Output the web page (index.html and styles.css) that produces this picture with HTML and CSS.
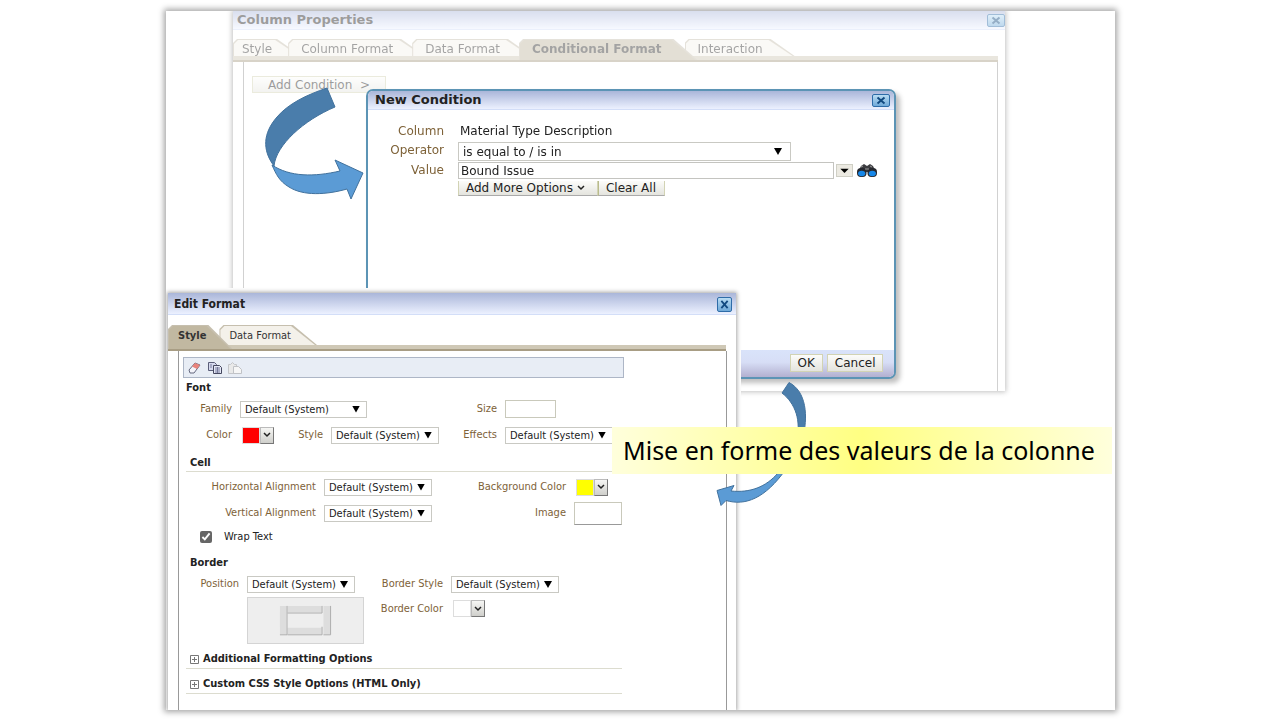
FILE: index.html
```html
<!DOCTYPE html>
<html lang="fr">
<head>
<meta charset="utf-8">
<title>Mise en forme conditionnelle</title>
<link rel="stylesheet" href="styles.css">
</head>
<body>
<main class="slide">

  <section class="win props" aria-label="Column Properties">
    <header class="bar"><h2>Column Properties</h2>
      <button class="close" aria-label="Close"><svg viewBox="0 0 10 8"><path d="M1.5 1l7 6M8.5 1l-7 6"/></svg></button></header>
    <nav class="tabs">
      <button class="tab">Style</button>
      <button class="tab">Column Format</button>
      <button class="tab">Data Format</button>
      <button class="tab active">Conditional Format</button>
      <button class="tab">Interaction</button>
    </nav>
    <div class="panel"><button class="btn add">Add Condition&nbsp; &gt;</button></div>
  </section>

  <section class="win cond" aria-label="New Condition">
    <header class="bar"><h2>New Condition</h2>
      <button class="close" aria-label="Close"><svg viewBox="0 0 10 8"><path d="M1.5 1l7 6M8.5 1l-7 6"/></svg></button></header>
    <div class="fields">
      <span class="lab">Column</span><span class="text">Material Type Description</span>
      <label class="lab" for="op">Operator</label>
      <span class="sel wide"><select id="op"><option>is equal to / is in</option></select></span>
      <label class="lab" for="val">Value</label>
      <div class="value">
        <input id="val" type="text" value="Bound Issue">
        <button class="drop" aria-label="Open list"><svg viewBox="0 0 10 6"><path d="M0 1h10L5 6z"/></svg></button>
        <button class="search" aria-label="Search"><svg viewBox="0 0 20 14">
          <path d="M4 2l3-2 3 2 3-2 3 2 3 6H1z" fill="#3c3c40"/>
          <rect x="0" y="4" width="9.500" height="9" rx="4" fill="#26282e"/><rect x="10.500" y="4" width="9.500" height="9" rx="4" fill="#26282e"/>
          <ellipse cx="4.700" cy="9.500" rx="3.600" ry="2.700" fill="#1687e8"/><ellipse cx="15.300" cy="9.500" rx="3.600" ry="2.700" fill="#1687e8"/>
          <path d="M4 3l2-1M13 2l2 1M8 5h4" stroke="#999" fill="none"/></svg></button>
      </div>
      <div class="actions">
        <button class="btn">Add More Options <svg viewBox="0 0 8 6"><path d="M1 1l3 3 3-3"/></svg></button>
        <button class="btn">Clear All</button>
      </div>
    </div>
    <footer><button class="btn">OK</button><button class="btn">Cancel</button></footer>
  </section>

  <svg class="arrow big" viewBox="263 83 103 120" aria-hidden="true">
    <path fill="#4a7dab" d="M327 88L335 107C304 120 276 145 274 166C262 150 263 133 277 117C288 104 306 95 327 88z"/>
    <path fill="#5b9bd5" d="M272 165C290 177 314 177 340 171L335 160L363 173L351 199L347 189C326 195 303 196 289 187C279 181 276 174 272 165z"/>
  </svg>

  <div class="sheet">
  <section class="win edit" aria-label="Edit Format">
    <header class="bar"><h2>Edit Format</h2>
      <button class="close" aria-label="Close"><svg viewBox="0 0 10 8"><path d="M1.5 0l7 8M8.5 0l-7 8"/></svg></button></header>
    <nav class="tabs">
      <button class="tab active">Style</button>
      <button class="tab">Data Format</button>
    </nav>
    <div class="panel">
      <div class="toolbar">
        <button aria-label="Clear"><svg viewBox="0 0 14 12"><path d="M1 8l6-7 5 2-6 8-4 0z" fill="#f4f4fa" stroke="#666a80"/><path d="M4 4.500l3-3.500 5 2-3 4z" fill="#e8837c"/></svg></button>
        <button aria-label="Copy"><svg viewBox="0 0 14 12"><path d="M.5.5h6l2 2v6h-8z" fill="#d5d9ee" stroke="#5a5d78"/><path d="M5.500 3.500h6l2 2v6h-8z" fill="#e4e7f6" stroke="#44475f"/><path d="M2 3h2M2 5h2M7 6h5M7 8h5M7 10h5M9.500 5v6" stroke="#777b9c"/></svg></button>
        <button aria-label="Paste"><svg viewBox="0 0 14 12"><path d="M.5 2.500h2l2-2 2 2h2v9h-8z" fill="#e9e9e9" stroke="#c4c6ca"/><path d="M5.500 4.500h5l3 3v4h-8z" fill="#f6f6f6" stroke="#c0c2c6"/></svg></button>
      </div>
      <h3 class="first">Font</h3>
      <div class="row"><label class="lab a" for="fam">Family</label><span class="sel fam"><select id="fam"><option>Default (System)</option></select></span>
        <label class="lab size" for="size">Size</label><input class="sizebox" id="size" type="text"></div>
      <div class="row"><span class="lab a">Color</span><span class="swatch red"><i></i><button aria-label="Color"><svg viewBox="0 0 8 6"><path d="M1 1l3 3 3-3"/></svg></button></span>
        <label class="lab sty" for="sty">Style</label><span class="sel"><select id="sty"><option>Default (System)</option></select></span>
        <label class="lab eff" for="eff">Effects</label><span class="sel"><select id="eff"><option>Default (System)</option></select></span></div>
      <h3 class="ruled">Cell</h3>
      <div class="row"><label class="lab c" for="ha">Horizontal Alignment</label><span class="sel"><select id="ha"><option>Default (System)</option></select></span>
        <span class="lab d">Background Color</span><span class="swatch yellow"><i></i><button aria-label="Background Color"><svg viewBox="0 0 8 6"><path d="M1 1l3 3 3-3"/></svg></button></span></div>
      <div class="row"><label class="lab c" for="va">Vertical Alignment</label><span class="sel"><select id="va"><option>Default (System)</option></select></span>
        <label class="lab d" for="img">Image</label><input class="imgbox" id="img" type="text"></div>
      <div class="row wrap"><input type="checkbox" id="wr" checked><label for="wr">Wrap Text</label></div>
      <h3>Border</h3>
      <div class="border">
        <label class="lab" for="pos">Position</label><span class="sel"><select id="pos"><option>Default (System)</option></select></span>
        <label class="lab" for="bs">Border Style</label><span class="sel"><select id="bs"><option>Default (System)</option></select></span>
        <button class="preview" aria-label="Border sides"><svg viewBox="0 0 56 32"><path fill="#ddd" d="M1 1h7v30H1zM47 1h7v30h-7zM9 1h36v7H9zM9 24h36v7H9z"/><path d="M1 31.500h7.500V1M47 31.500h7.500V1M9 8.500h36.500V1M9 31.500h36.500V23" fill="none" stroke="#aaa"/></svg></button>
        <span class="lab">Border Color</span><span class="swatch white"><i></i><button aria-label="Border Color"><svg viewBox="0 0 8 6"><path d="M1 1l3 3 3-3"/></svg></button></span>
      </div>
      <h3 class="more"><button><svg viewBox="0 0 9 9"><path d="M.5.5h8v8h-8zM2 4.500h5M4.500 2v5"/></svg>Additional Formatting Options</button></h3>
      <h3 class="more"><button><svg viewBox="0 0 9 9"><path d="M.5.5h8v8h-8zM2 4.500h5M4.500 2v5"/></svg>Custom CSS Style Options (HTML Only)</button></h3>
    </div>
  </section>
  </div>

  <svg class="arrow small" viewBox="712 378 98 130" aria-hidden="true">
    <path fill="#4a7dab" d="M787 381.500L780 392C793 402 800 420 794 440L800 440C807 415 804 390 787 381.500z"/>
    <path fill="#5b9bd5" d="M784 468C763 498 743 505 724 499.500L719 504.500L715 489.500L732 484.500L729 490C748 492 764 486 776 472z"/>
  </svg>
  <p class="caption">Mise en forme des valeurs de la colonne</p>
</main>
</body>
</html>
```
FILE: styles.css
```css
* { box-sizing: border-box; }
body {
  margin: 0;
  min-height: 100vh;
  padding: 11px 165px 10px 166px;
  display: flex;
  background: #fff;
  font: 12px/16px "DejaVu Sans", Verdana, sans-serif;
  color: #222;
}
button, input, select { font: inherit; color: inherit; margin: 0; padding: 0; border: 0; background: none; border-radius: 0; }
h2, h3, p { margin: 0; font-size: inherit; }
svg { display: block; }

.slide {
  position: relative;
  flex: 1;
  min-width: 0;
  overflow: hidden;
  background: #fff;
  box-shadow: 0 0 6px 2px rgba(0, 0, 0, .36);
}
.win { display: flex; flex-direction: column; background: #fff; }
.props, .cond, .sheet, .arrow, .caption { position: absolute; }

/* title bars */
.bar {
  display: flex;
  align-items: center;
  justify-content: space-between;
  height: 19px;
  padding: 0 4px 0 7px;
  background: linear-gradient(#aab6d9, #ecf1ff);
  border-bottom: 1px solid #d3def8;
}
.bar h2 { font-size: 13px; }
.close { width: 18px; height: 13px; padding: 1px 3px; border: 1px solid #2e6ca8; border-radius: 2px; background: linear-gradient(#b9dcf3, #6fa9d8); }
.close svg { width: 100%; height: 100%; stroke: #124a80; stroke-width: 2; }

/* tabs */
.tabs { display: flex; align-items: flex-end; border-bottom: 2px solid #a89d84; box-shadow: inset 0 -4px #cfc8b6; }
.tab { position: relative; z-index: 0; height: 20px; padding: 0 32px 3px 13px; margin-left: -13px; white-space: nowrap; color: #333; }
.tab:first-child { margin-left: 0; padding-left: 9px; }
.tab::before, .tab::after {
  content: "";
  position: absolute;
  z-index: -1;
  inset: 0 0 4px;
  background: #c6bfae;
  clip-path: polygon(0 100%, 0 4px, 4px 0, calc(100% - 24px) 0, 100% 100%);
}
.tab::after { inset: 1px 2px 4px 1px; background: #f4f1ea; }
.tab.active { z-index: 1; font-weight: bold; }
.tab.active::before { bottom: 0; }
.tab.active::after { bottom: 0; background: #c1b8a1; }

/* buttons, labels, lists */
.btn { padding: 0 6px; border: 1px solid #d2d3b4; background: linear-gradient(#fcfcfa, #e4e4de); white-space: nowrap; }
.btn svg, .swatch svg { width: 8px; height: 6px; fill: none; stroke: #222; stroke-width: 1.500; }
.lab { color: #7e6238; text-align: right; white-space: nowrap; }
.sel { position: relative; display: flex; width: 108px; height: 17px; border: 1px solid #c9c9c3; background: #fff; }
.sel select { appearance: none; width: 100%; padding: 0 4px; outline: 0; }
.sel::after { content: ""; position: absolute; right: 6px; top: 4px; width: 8px; height: 7px; background: #000; clip-path: polygon(0 0, 100% 0, 50% 100%); pointer-events: none; }

/* Column Properties */
.props { left: 67px; top: 0; width: 81.300%; height: 380px; opacity: .45; box-shadow: 0 0 5px 1px #777; }
.props .bar { padding: 0 0 0 4px; }
.props .tabs { margin: 9px 7px 0 0; }
.props .tab { height: 21px; padding-bottom: 2px; }
.props .tab:first-child { padding-right: 29px; }
.props .tab.active { padding-right: 36px; }
.props .panel { flex: 1; margin: 0 7px 0 10px; padding: 14px 8px; border: solid #999; border-width: 0 1px; }
.add { height: 17px; padding: 0 15px; }

/* New Condition */
.cond { left: 200px; top: 78px; width: 55.900%; height: 290px; overflow: hidden; border: 2px solid #5c94b5; border-radius: 7px; box-shadow: 4px 4px 5px rgba(0, 0, 0, .25); }
.fields { flex: 1; display: grid; grid-template-columns: 76px minmax(0, 1fr); column-gap: 14px; align-content: start; grid-template-rows: 19px 20px 19px 15px; padding: 13px 17px 0 0; }
.text { padding-left: 2px; }
.wide { width: 333px; height: 19px; }
.wide::after { top: 5px; right: 8px; }
.value { display: flex; align-items: center; gap: 2px; height: 17px; }
.value input { flex: 1; min-width: 0; height: 17px; padding: 0 2px; border: 1px solid #c4c4c0; }
.drop { width: 17px; height: 13px; padding: 3px; border: 1px solid #cfcfc5; background: #eceae2; }
.drop svg { width: 9px; height: 5px; }
.search { width: 20px; height: 14px; margin-left: 2px; }
.actions { grid-column: 2; display: flex; }
.actions .btn { display: flex; align-items: center; gap: 4px; height: 15px; padding: 0 8px 0 7px; border-top: 0; border-bottom-color: #aaa; }
.actions .btn:first-child { padding-right: 12px; }
.actions .btn + .btn { border-left-color: #b9bb8c; }
.cond footer { display: flex; justify-content: flex-end; gap: 4px; padding: 4px 11px; height: 27px; background: linear-gradient(#d9e3fa, #d7def6 45%, #b3b0d0); }
.cond footer .btn { height: 18px; padding: 0 7px; }

/* Edit Format, over a white sheet */
.sheet { left: 2px; top: 277px; bottom: 0; width: 60.400%; padding: 5px 5px 0 0; background: #fff; font: 11px/16px "DejaVu Sans Condensed", Tahoma, sans-serif; }
.edit { height: 100%; box-shadow: 0 0 4px 1px rgba(0, 0, 0, .35); }
.edit .bar { height: 22px; padding: 1px 4px 0 6px; }
.edit h2 { font-size: 12px; }
.edit .close { width: 15px; height: 15px; padding: 2px; }
.edit .tabs { margin: 10px 10px 0 0; }
.edit .tab { height: 24px; padding: 0 26px 2px 10px; }
.edit .panel { flex: 1; display: flex; flex-direction: column; margin: 0 9px 0 10px; padding: 6px 104px 0 7px; border: solid #999; border-width: 0 1px; }
.toolbar { display: flex; align-items: center; gap: 6px; height: 21px; margin: 0 -2px 0 -3px; padding: 0 4px; border: 1px solid #adb6c6; background: #e8edf5; }
.toolbar svg { width: 14px; height: 12px; fill: none; }
.edit h3 { padding-left: 4px; margin-top: 2px; }
.edit h3.first { padding-left: 0; }
.edit h3.ruled { margin-top: 7px; height: 17px; border-bottom: 1px solid #dcdccf; margin-bottom: 2px; }
.row { display: flex; align-items: center; gap: 8px; height: 26px; white-space: nowrap; }
.a { width: 46px; }
.fam { width: 127px; }
.size { width: 122px; }
.sizebox, .imgbox { width: 51px; height: 18px; border: 1px solid #c9c9bb; }
.imgbox { width: 48px; height: 23px; border-bottom-color: #999; }
.sty { width: 41px; }
.eff { width: 50px; }
.c { width: 130px; }
.d { width: 126px; }
.swatch { display: flex; width: 34px; height: 17px; padding-left: 2px; }
.swatch i { width: 18px; border: 1px solid #ddd; }
.swatch button { flex: 1; padding: 0 2px; border: 1px solid #bbb; border-right-color: #777; border-bottom-color: #777; background: linear-gradient(#f6f6f4, #cfcfcb); }
.red i { background: #f00; }
.yellow i { background: #ff0; }
.wrap { height: 22px; padding-left: 14px; gap: 12px; }
.wrap input { width: 12px; height: 12px; accent-color: #666; }
.edit .wrap + h3 { margin-top: 7px; margin-bottom: 5px; }
.border { display: grid; grid-template-columns: 53px 117px 71px 108px; column-gap: 8px; row-gap: 4px; align-items: start; }
.border .swatch { margin-top: 3px; }
.border .preview + .lab { margin-top: 4px; }
.preview { grid-column: 2; width: 117px; height: 47px; padding: 7px 31px; border: 1px solid #d4d4d4; background: #eee; }
.edit .more { height: 18px; margin: 7px 0 0; border-bottom: 1px solid #dcdccf; }
.more button { display: flex; align-items: center; gap: 4px; font-weight: bold; }
.more svg { width: 9px; height: 9px; fill: none; stroke: #777; }

/* arrows and caption */
.arrow path { stroke: #41719c; stroke-width: 1; stroke-linejoin: round; }
.big { left: 97px; top: 72px; width: 103px; }
.small { left: 548px; top: 368px; width: 98px; }
.caption {
  left: 446px;
  top: 416px;
  padding: 0 17px 0 11px;
  background: linear-gradient(90deg, #ffffdc, #ffff82 50%, #ffffdc);
  color: #000;
  font: 25px/47px "Noto Sans", Calibri, sans-serif;
  white-space: nowrap;
}
```
